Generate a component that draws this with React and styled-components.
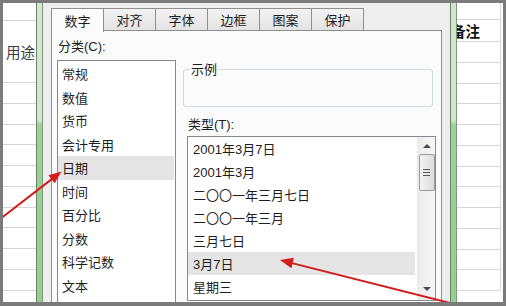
import styled, { createGlobalStyle } from "styled-components";

const GlobalStyle = createGlobalStyle`
  html, body {
    margin: 0;
    padding: 0;
    background: #7b7b7b;
  }
  body {
    font-family: "Liberation Sans", "Noto Sans CJK SC", sans-serif;
  }
`;

const Frame = styled.div`
  position: relative;
  box-sizing: border-box;
  width: 506px;
  height: 306px;
  border: 3px solid #7b7b7b;
  border-bottom-width: 4px;
  background: #ffffff;
  display: flex;
  overflow: hidden;
`;

const Sheet = styled.div`
  width: ${({ $w }) => $w}px;
  flex-shrink: 0;
  display: flex;
  flex-direction: column;
  overflow: hidden;
  background: #ffffff;
`;

const Cell = styled.div`
  box-sizing: border-box;
  height: ${({ $h }) => $h}px;
  flex-shrink: 0;
  border-bottom: 1px solid #d6d6d6;
  border-right: ${({ $edge }) => ($edge ? "1px solid #d6d6d6" : "none")};
  margin-right: ${({ $edge }) => ($edge ? "2px" : "0")};
  padding-right: ${({ $pr }) => $pr || 0}px;
  display: flex;
  align-items: center;
  justify-content: ${({ $align }) => $align || "flex-start"};
  font-family: "Noto Sans CJK SC", sans-serif;
  font-size: 14.5px;
  font-weight: ${({ $bold }) => ($bold ? 700 : 400)};
  color: ${({ $bold }) => ($bold ? "#111" : "#3a3a3a")};
  white-space: nowrap;
`;

const HeadText = styled.span`
  margin-left: ${({ $shift }) => $shift || 0}px;
`;

const GreenBar = styled.div`
  box-sizing: border-box;
  width: 7px;
  flex-shrink: 0;
  border-left: 1px solid #6f806f;
  border-right: 1px solid #7f957f;
  background: linear-gradient(
    to bottom,
    #cfe9cb 0,
    #cfe9cb 117px,
    #98d492 122px,
    #93d28d 100%
  );
`;

const Dialog = styled.div`
  flex: 1;
  display: flex;
  flex-direction: column;
  background: #eeeeee;
  padding: 5px 8px 0 8px;
  min-width: 0;
`;

const TabRow = styled.div`
  display: flex;
  height: 23px;
  flex-shrink: 0;
  position: relative;
  z-index: 1;
`;

const Tab = styled.div`
  box-sizing: border-box;
  width: 53px;
  height: ${({ $active }) => ($active ? "24px" : "23px")};
  margin-left: ${({ $first }) => ($first ? "0" : "-1px")};
  border: 1px solid #8f8f8f;
  border-bottom: ${({ $active }) => ($active ? "none" : "1px solid #8f8f8f")};
  background: ${({ $active }) =>
    $active ? "#fbfbfb" : "linear-gradient(to bottom, #f3f3f3, #e3e3e3)"};
  display: flex;
  align-items: center;
  justify-content: center;
  font-family: "Noto Sans CJK SC", sans-serif;
  font-size: 13px;
  color: #1c1c1c;
`;

const Panel = styled.div`
  flex: 1;
  box-sizing: border-box;
  border: 1px solid #8f8f8f;
  border-bottom: none;
  margin-top: -1px;
  background: #fbfbfb;
  display: flex;
  padding: 8px 0 0 5px;
`;

const Column = styled.div`
  display: flex;
  flex-direction: column;
  width: ${({ $w }) => $w}px;
  margin-left: ${({ $ml }) => $ml || 0}px;
  padding-top: ${({ $pt }) => $pt || 0}px;
`;

const Label = styled.div`
  font-family: "Liberation Sans", "Noto Sans CJK SC", sans-serif;
  font-size: 13px;
  line-height: 16px;
  color: #1c1c1c;
  margin-left: ${({ $ml }) => $ml || 0}px;
  margin-top: ${({ $mt }) => $mt || 0}px;
`;

const ListBox = styled.div`
  box-sizing: border-box;
  border: 1px solid #85888f;
  background: #ffffff;
  margin-top: ${({ $mt }) => $mt}px;
  margin-left: ${({ $ml }) => $ml || 0}px;
  height: ${({ $h }) => $h}px;
  display: flex;
  overflow: hidden;
`;

const Items = styled.div`
  flex: 1;
  display: flex;
  flex-direction: column;
  padding-top: ${({ $pt }) => $pt || 0}px;
`;

const Item = styled.div`
  box-sizing: border-box;
  height: ${({ $h }) => $h}px;
  flex-shrink: 0;
  padding-left: ${({ $pl }) => $pl}px;
  margin-right: ${({ $mr }) => $mr}px;
  display: flex;
  align-items: center;
  background: ${({ $selected }) => ($selected ? "#e5e5e5" : "transparent")};
  font-family: "Liberation Sans", "Noto Sans CJK SC", sans-serif;
  font-size: 13px;
  color: #1e1e1e;
  white-space: nowrap;
`;

const Sample = styled.fieldset`
  margin: 0;
  padding: 0;
  height: 45px;
  border: 1px solid #d3dbe0;
  border-radius: 3px;
  margin-left: 1px;
  width: 250px;
  box-sizing: border-box;
`;

const Legend = styled.legend`
  padding: 0 1px;
  margin-left: 6px;
  font-family: "Noto Sans CJK SC", sans-serif;
  font-size: 13px;
  line-height: 14px;
  color: #1c1c1c;
`;

const ScrollBar = styled.div`
  width: 17px;
  flex-shrink: 0;
  display: flex;
  flex-direction: column;
  align-items: center;
  background: linear-gradient(to right, #ececec, #f6f6f6);
  border-left: 1px solid #e9e9e9;
`;

const Arrow = styled.div`
  width: 0;
  height: 0;
  border-left: 4px solid transparent;
  border-right: 4px solid transparent;
  ${({ $down }) =>
    $down ? "border-top: 4px solid #4a4a4a;" : "border-bottom: 4px solid #4a4a4a;"}
  margin-top: ${({ $mt }) => $mt}px;
`;

const Thumb = styled.div`
  box-sizing: border-box;
  width: 16px;
  height: 37px;
  margin-top: 6px;
  border: 1px solid #9c9c9c;
  border-radius: 2px;
  background: linear-gradient(to right, #f4f4f4, #dcdcdc);
  display: flex;
  flex-direction: column;
  align-items: center;
  justify-content: center;
  gap: 2px;
`;

const Grip = styled.div`
  width: 7px;
  height: 1px;
  background: #555;
`;

const Overlay = styled.svg`
  position: absolute;
  top: -3px;
  left: -3px;
  pointer-events: none;
`;

const categories = [
  "常规",
  "数值",
  "货币",
  "会计专用",
  "日期",
  "时间",
  "百分比",
  "分数",
  "科学记数",
  "文本",
];

const types = [
  "2001年3月7日",
  "2001年3月",
  "二〇〇一年三月七日",
  "二〇〇一年三月",
  "三月七日",
  "3月7日",
  "星期三",
];

const tabs = ["数字", "对齐", "字体", "边框", "图案", "保护"];

const rows = Array.from({ length: 12 }, (_, i) => i);

const App = () => {
  return (
    <>
      <GlobalStyle />
      <Frame>
        <Sheet $w={33}>
          <Cell $h={18} />
          <Cell $h={62} $align="flex-end" $pr={1}>
            用途
          </Cell>
          {rows.map((r) => (
            <Cell key={r} $h={20.75} />
          ))}
        </Sheet>
        <GreenBar />
        <Dialog>
          <TabRow>
            {tabs.map((t, i) => (
              <Tab key={t} $first={i === 0} $active={i === 0}>
                {t}
              </Tab>
            ))}
          </TabRow>
          <Panel>
            <Column $w={119}>
              <Label $ml={1}>分类(C):</Label>
              <ListBox $mt={5} $h={260}>
                <Items $pt={1}>
                  {categories.map((c) => (
                    <Item
                      key={c}
                      $h={23.5}
                      $pl={4}
                      $mr={1}
                      $selected={c === "日期"}
                    >
                      {c}
                    </Item>
                  ))}
                </Items>
              </ListBox>
            </Column>
            <Column $w={254} $ml={6} $pt={23}>
              <Sample>
                <Legend>示例</Legend>
              </Sample>
              <Label $ml={6} $mt={10}>
                类型(T):
              </Label>
              <ListBox $mt={3} $ml={5} $h={165}>
                <Items>
                  {types.map((t) => (
                    <Item
                      key={t}
                      $h={23}
                      $pl={5}
                      $mr={2}
                      $selected={t === "3月7日"}
                    >
                      {t}
                    </Item>
                  ))}
                </Items>
                <ScrollBar>
                  <Arrow $mt={7} />
                  <Thumb>
                    <Grip />
                    <Grip />
                    <Grip />
                  </Thumb>
                  <Arrow $down $mt={96} />
                </ScrollBar>
              </ListBox>
            </Column>
          </Panel>
        </Dialog>
        <GreenBar />
        <Sheet $w={46}>
          <Cell $h={17} $edge />
          <Cell $h={22} $edge $bold>
            <HeadText $shift={-6}>备注</HeadText>
          </Cell>
          {rows.map((r) => (
            <Cell key={r} $h={20.75} $edge />
          ))}
        </Sheet>
        <Overlay width="506" height="306" viewBox="0 0 506 306">
          <line x1="-2" y1="220.5" x2="55" y2="176.6" stroke="#d21d1d" strokeWidth="2" />
          <polygon points="61.5,171.5 54.6,183.3 48.4,175.3" fill="#d21d1d" />
          <line x1="458" y1="305" x2="290" y2="262.6" stroke="#d21d1d" strokeWidth="2" />
          <polygon points="280,260 293.8,257.8 291.4,268.3" fill="#d21d1d" />
        </Overlay>
      </Frame>
    </>
  );
};

export default App;
